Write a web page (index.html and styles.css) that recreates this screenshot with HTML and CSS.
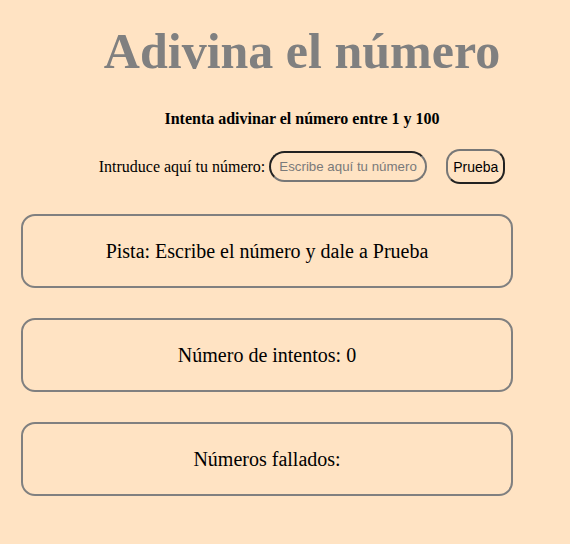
FILE: index.html
```html
<!DOCTYPE html>
<html lang="es">
<head>
<meta charset="utf-8">
<title>Adivina el número</title>
<link rel="stylesheet" href="styles.css">
</head>
<body>
<header class="top">
  <h1 class="title">Adivina el número</h1>
  <p class="subtitle">Intenta adivinar el número entre 1 y 100</p>
  <div class="form-row">
    <label class="label" for="num">Intruduce aquí tu número:</label>
    <input class="field" id="num" type="text" placeholder="Escribe aquí tu número">
    <button class="btn" type="button">Prueba</button>
  </div>
</header>
<section class="boxes">
  <div class="box">Pista: Escribe el número y dale a Prueba</div>
  <div class="box">Número de intentos: 0</div>
  <div class="box">Números fallados:</div>
</section>
</body>
</html>
```
FILE: styles.css
```css
html, body {
  background: #ffe3c3;
}
body {
  margin: 0;
  padding: 0;
  font-family: "Liberation Serif", "Times New Roman", serif;
  color: #000;
}
.top {
  padding-left: 34px;
  text-align: center;
}
.title {
  margin: 0;
  padding-top: 22px;
  font-size: 50px;
  line-height: 58px;
  font-weight: bold;
  color: #808080;
}
.subtitle {
  margin: 30px 0 0;
  font-size: 16px;
  line-height: 18px;
  font-weight: bold;
}
.form-row {
  margin-top: 21px;
  display: flex;
  justify-content: center;
  align-items: center;
}
.label {
  font-size: 16px;
}
.field {
  box-sizing: border-box;
  margin-left: 4px;
  width: 158px;
  height: 31px;
  padding: 0 8px;
  border: 2px solid #777;
  border-top-color: #222;
  border-left-color: #222;
  border-radius: 16px;
  background: transparent;
  font-family: "Liberation Sans", Arial, sans-serif;
  font-size: 13.3px;
  color: #000;
}
.field::placeholder {
  color: #7a7a7a;
}
.btn {
  box-sizing: border-box;
  margin-left: 19px;
  width: 59px;
  height: 35px;
  padding: 0;
  border: 2px solid #222;
  border-top-color: #777;
  border-left-color: #777;
  border-radius: 14px;
  background: transparent;
  font-family: "Liberation Sans", Arial, sans-serif;
  font-size: 14px;
  color: #000;
}
.boxes {
  margin-top: 30px;
  display: flex;
  flex-direction: column;
  gap: 30px;
  padding-left: 21px;
}
.box {
  box-sizing: border-box;
  width: 492px;
  height: 74px;
  border: 2px solid #808080;
  border-radius: 14px;
  display: flex;
  align-items: center;
  justify-content: center;
  font-size: 20px;
}
```
